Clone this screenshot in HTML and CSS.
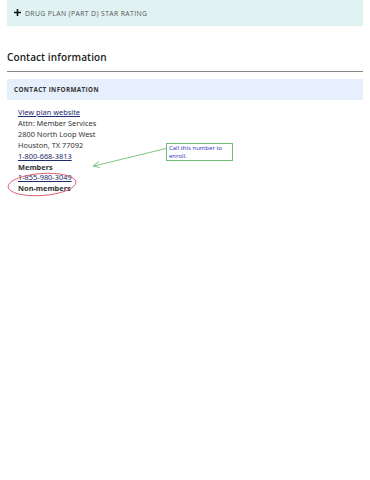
FILE: index.html
```html
<!DOCTYPE html>
<html lang="en">
  <head>
    <meta charset="UTF-8" />
    <meta name="viewport" content="width=device-width, initial-scale=1.0" />
    <title>Contact information</title>
    <link rel="stylesheet" href="styles.css">
  </head>
  <body>
    <div class="wrap">
      <div class="rating">
        <span class="plus">
          <svg width="7" height="7" viewBox="0 0 7 7"><path d="M3.5 0v7M0 3.5h7" stroke="#111" stroke-width="1.6"/></svg>
        </span>
        <span>DRUG PLAN (PART D) STAR RATING</span>
      </div>

      <h2 class="heading">Contact information</h2>

      <div class="panel">CONTACT INFORMATION</div>

      <div class="contact">
        <a href="#">View plan website</a>
        <p>Attn: Member Services</p>
        <p>2800 North Loop West</p>
        <p>Houston, TX 77092</p>
        <a href="#">1-800-668-3813</a>
        <p class="bold">Members</p>
        <a href="#">1-855-980-3049</a>
        <p class="bold">Non-members</p>
      </div>

      <!-- review notes drawn over the page -->
      <svg class="marks" width="370" height="200" viewBox="0 0 370 200">
        <line x1="166" y1="148.5" x2="94" y2="166" stroke="#6cbf78" stroke-width="0.9"/>
        <path d="M99 161.5 L93 166 L100 167.5" fill="none" stroke="#6cbf78" stroke-width="0.9"/>
        <ellipse cx="42" cy="184.5" rx="34" ry="11" fill="none" stroke="#d9546a" stroke-width="0.9" transform="rotate(-4 42 184.5)"/>
      </svg>
      <div class="note">Call this number to<br>enroll.</div>
    </div>
  </body>
</html>
```

FILE: styles.css
```css
body {
  margin: 0;
  background: #fff;
  font-family: "Open Sans", sans-serif;
}
.wrap {
  position: relative;
  padding: 0 7px;
}
.rating {
  display: flex;
  align-items: center;
  gap: 4px;
  height: 26px;
  padding-left: 7px;
  background: #e1f2f2;
  color: #555;
  font-size: 6.8px;
  letter-spacing: 0.4px;
}
.plus {
  display: flex;
  margin-top: -1px;
}
.heading {
  margin: 0;
  padding: 24px 0 7px;
  font-size: 10px;
  font-weight: 600;
  letter-spacing: 0.1px;
  color: #222;
  border-bottom: 1px solid #888;
}
.panel {
  margin-top: 7px;
  height: 21px;
  display: flex;
  align-items: center;
  padding-left: 7px;
  background: #e6effc;
  color: #333;
  font-size: 6.3px;
  font-weight: 700;
  letter-spacing: 0.4px;
}
.contact {
  display: flex;
  flex-direction: column;
  align-items: flex-start;
  padding: 7px 11px;
  font-family: "Noto Sans", sans-serif;
  font-size: 7.4px;
  line-height: 10.9px;
  color: #333;
}
.contact p {
  margin: 0;
}
.contact a {
  color: #1d2a6b;
}
.bold {
  font-weight: 700;
}
.marks {
  position: absolute;
  top: 0;
  left: 0;
}
.note {
  position: absolute;
  top: 143px;
  left: 166px;
  width: 61px;
  height: 14px;
  padding: 1px 2px;
  border: 1px solid #6cbf78;
  color: #2b2bbf;
  font-size: 6px;
  line-height: 7.5px;
}
```
